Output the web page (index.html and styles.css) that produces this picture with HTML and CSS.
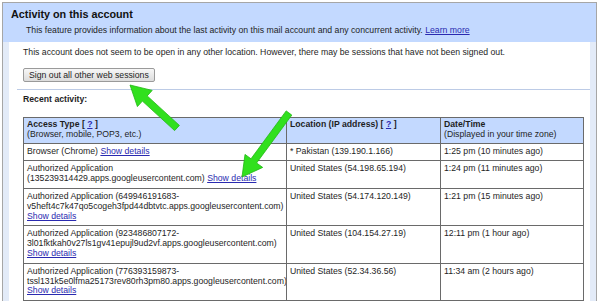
FILE: index.html
```html
<!DOCTYPE html>
<html lang="en">
<head>
    <meta charset="UTF-8">
    <title>Activity on this account</title>
    <link rel="stylesheet" href="styles.css">
</head>
<body>
    <div class="panel">
        <div class="panel-head">
            <h1>Activity on this account</h1>
            <p class="intro">This feature provides information about the last activity on this mail account and any concurrent activity. <a href="#">Learn more</a></p>
        </div>

        <div class="panel-body">
            <p class="status">This account does not seem to be open in any other location. However, there may be sessions that have not been signed out.</p>
            <button type="button" class="signout">Sign out all other web sessions</button>
            <hr class="sep">
            <h2>Recent activity:</h2>

            <table class="activity">
                <colgroup>
                    <col class="c-type">
                    <col class="c-loc">
                    <col class="c-time">
                </colgroup>
                <tr>
                    <th><b>Access Type [ <a href="#">?</a> ]</b><br>(Browser, mobile, POP3, etc.)</th>
                    <th><b>Location (IP address) [ <a href="#">?</a> ]</b></th>
                    <th><b>Date/Time</b><br>(Displayed in your time zone)</th>
                </tr>
                <tr>
                    <td>Browser (Chrome) <a href="#">Show details</a></td>
                    <td>* Pakistan (139.190.1.166)</td>
                    <td>1:25 pm (10 minutes ago)</td>
                </tr>
                <tr>
                    <td>Authorized Application<br>(135239314429.apps.googleusercontent.com) <a href="#">Show details</a></td>
                    <td>United States (54.198.65.194)</td>
                    <td>1:24 pm (11 minutes ago)</td>
                </tr>
                <tr>
                    <td>Authorized Application (649946191683-<br>v5heft4c7k47qo5cogeh3fpd44dbtvtc.apps.googleusercontent.com)<br><a href="#">Show details</a></td>
                    <td>United States (54.174.120.149)</td>
                    <td>1:21 pm (15 minutes ago)</td>
                </tr>
                <tr>
                    <td>Authorized Application (923486807172-<br>3l01fktkah0v27ls1gv41epujl9ud2vf.apps.googleusercontent.com)<br><a href="#">Show details</a></td>
                    <td>United States (104.154.27.19)</td>
                    <td>12:11 pm (1 hour ago)</td>
                </tr>
                <tr>
                    <td>Authorized Application (776393159873-<br>tssl131k5e0lfma25173rev80rh3pm80.apps.googleusercontent.com)<br><a href="#">Show details</a></td>
                    <td>United States (52.34.36.56)</td>
                    <td>11:34 am (2 hours ago)</td>
                </tr>
            </table>
        </div>
    </div>

    <!-- green callout arrows drawn over the page -->
    <svg class="arrows" width="600" height="301" viewBox="0 0 600 301">
        <polygon points="130,85 152.2,90.4 147.2,95.9 179.4,125.4 174.6,130.6 142.4,101.1 137.4,106.6" />
        <polygon points="242,177 262.7,167.4 256.6,163 291.8,115.1 286.2,110.9 251,158.8 245,154.4" />
    </svg>
</body>
</html>
```

FILE: styles.css
```css
body {
    margin: 0;
    background: #ffffff;
    font-family: 'Liberation Sans', Arial, sans-serif;
    font-size: 8.7px;
    color: #1e1e1e;
    height: 301px;
    overflow: hidden;
}

a {
    color: #2a2ab0;
    text-decoration: underline;
}

.panel {
    margin: 2px 3px 0 2px;
    border: 1px solid #a6a6a6;
    border-bottom: none;
}

.panel-head {
    background-color: #c3d9ff;
    padding: 5px 8px 6px 8px;
}

h1 {
    margin: 0;
    font-size: 10.8px;
    line-height: 13px;
    font-weight: bold;
    color: #111;
}

.intro {
    margin: 4px 0 0 15px;
    line-height: 11px;
}

.panel-body {
    background-color: #ffffff;
    border-left: 6px solid #e3ebf8;
    border-right: 6px solid #e3ebf8;
    padding: 0 6px 10px 14px;
}

.status {
    margin: 0;
    padding-top: 5px;
    line-height: 11px;
}

.signout {
    display: block;
    margin-top: 10px;
    height: 14px;
    padding: 0 5px;
    font-family: inherit;
    font-size: 8.7px;
    line-height: 12px;
    color: #1e1e1e;
    background: linear-gradient(#f7f7f7, #dcdcdc);
    border: 1px solid #9a9a9a;
    border-radius: 2px;
}

.sep {
    margin: 7px -6px 0 -6px;
    border: none;
    border-top: 1px solid #bccbe6;
    height: 0;
}

h2 {
    margin: 4px 0 0 0;
    font-size: 8.7px;
    line-height: 11px;
    font-weight: bold;
}

.activity {
    margin-top: 12px;
    width: 100%;
    table-layout: fixed;
    border-collapse: collapse;
}

.c-type {
    width: 263px;
}

.c-loc {
    width: 154px;
}

.activity th,
.activity td {
    border: 1px solid #6a6a6a;
    padding: 3px 3px 4px 3px;
    line-height: 9.8px;
    text-align: left;
    vertical-align: top;
    white-space: nowrap;
    overflow: hidden;
}

.activity th {
    background-color: #c3d9ff;
    font-weight: normal;
    padding: 2px 3px 3px 3px;
}

.arrows {
    position: absolute;
    left: 0;
    top: 0;
    pointer-events: none;
}

.arrows polygon {
    fill: #31e01e;
    stroke: #20b812;
    stroke-width: 0.8;
    stroke-linejoin: round;
}
```
